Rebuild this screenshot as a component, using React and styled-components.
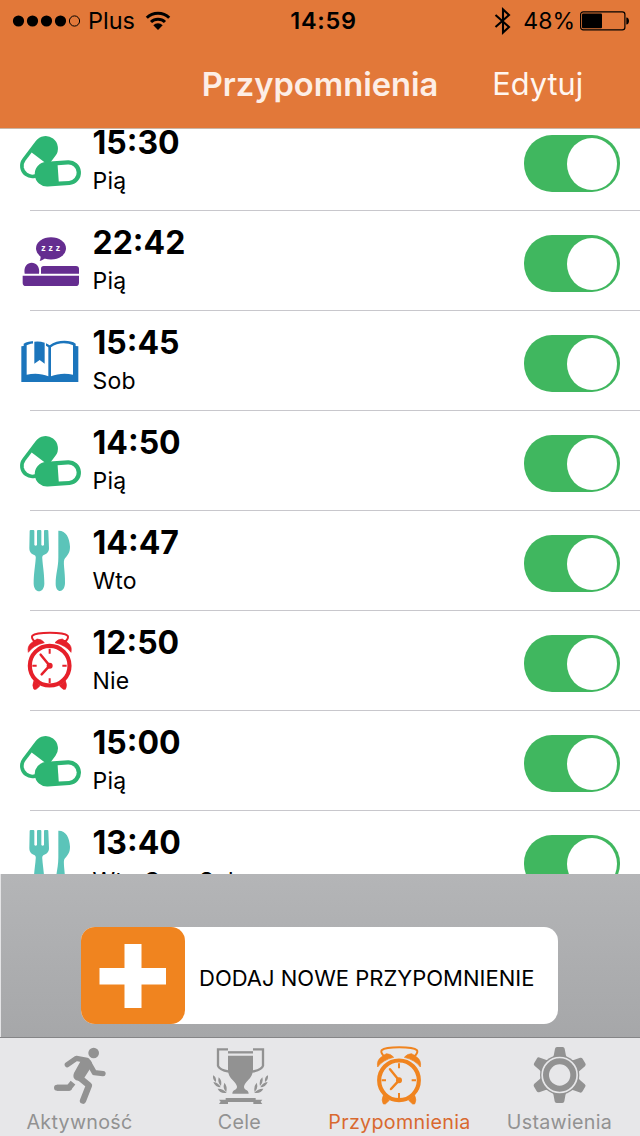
import React from 'react';
import styled, { createGlobalStyle } from 'styled-components';

const reminders = [
  { time: '15:30', days: 'Pią', icon: 'pills' },
  { time: '22:42', days: 'Pią', icon: 'sleep' },
  { time: '15:45', days: 'Sob', icon: 'book' },
  { time: '14:50', days: 'Pią', icon: 'pills' },
  { time: '14:47', days: 'Wto', icon: 'meal' },
  { time: '12:50', days: 'Nie', icon: 'alarm' },
  { time: '15:00', days: 'Pią', icon: 'pills' },
  { time: '13:40', days: 'Wto Czw Sob', icon: 'meal' },
];

export default function App() {
  return (
    <Screen>
      <GlobalStyle />
      <Header>
        <StatusBar>
          <Carrier>
            <SignalDots />
            <CarrierName>Plus</CarrierName>
            <WifiIcon />
          </Carrier>
          <Clock>14:59</Clock>
          <Power>
            <BluetoothIcon />
            <Percent>48%</Percent>
            <BatteryIcon />
          </Power>
        </StatusBar>
        <NavBar>
          <span />
          <Title>Przypomnienia</Title>
          <EditButton>Edytuj</EditButton>
        </NavBar>
      </Header>
      <List>
        {reminders.map((item, index) => {
          const Icon = rowIcons[item.icon];
          return (
            <Row key={index}>
              <Icon />
              <Details>
                <Time>{item.time}</Time>
                <Days>{item.days}</Days>
              </Details>
              <Toggle role="switch" aria-checked="true">
                <Knob />
              </Toggle>
            </Row>
          );
        })}
      </List>
      <AddPanel>
        <AddButton>
          <PlusBox>
            <svg width="68" height="64" viewBox="0 0 68 64">
              <path
                d="M25.5 0h17v24H67v16.500H42.500V64h-17V40.500H.500V24h25z"
                fill="#fff"
              />
            </svg>
          </PlusBox>
          <AddLabel>DODAJ NOWE PRZYPOMNIENIE</AddLabel>
        </AddButton>
      </AddPanel>
      <TabBar>
        <Tab>
          <RunnerIcon />
          <TabLabel>Aktywność</TabLabel>
        </Tab>
        <Tab>
          <TrophyIcon />
          <TabLabel>Cele</TabLabel>
        </Tab>
        <Tab $active>
          <AlarmIcon color="#f0841f" width="70" height="64" viewBox="47 358 210 192" />
          <TabLabel>Przypomnienia</TabLabel>
        </Tab>
        <Tab>
          <GearIcon />
          <TabLabel>Ustawienia</TabLabel>
        </Tab>
      </TabBar>
    </Screen>
  );
}

function SignalDots() {
  return (
    <svg width="69" height="14" viewBox="0 0 69 14">
      <circle cx="6.500" cy="7" r="5.600" />
      <circle cx="20.500" cy="7" r="5.600" />
      <circle cx="34.500" cy="7" r="5.600" />
      <circle cx="48.500" cy="7" r="5.600" />
      <circle cx="62.500" cy="7" r="5.100" fill="none" stroke="#000" />
    </svg>
  );
}

function WifiIcon() {
  return (
    <svg width="26" height="20" viewBox="0 0 26 20">
      <path
        d="M1.800 6.700a16 16 0 0 1 22.400 0M6 11a10 10 0 0 1 14 0"
        fill="none"
        stroke="#000"
        strokeWidth="3"
      />
      <path d="M13 19l-4.700-4.700a6.700 6.700 0 0 1 9.400 0z" />
    </svg>
  );
}

function BluetoothIcon() {
  return (
    <svg width="18" height="28" viewBox="0 0 18 28">
      <path
        d="M1.500 8l13.500 12-6 5.500V2.500l6 5.500-13.500 12"
        fill="none"
        stroke="#000"
        strokeWidth="2.100"
      />
    </svg>
  );
}

function BatteryIcon() {
  return (
    <svg width="50" height="20" viewBox="0 0 50 20">
      <rect x="0.600" y="0.800" width="44.300" height="18" rx="2.600" fill="none" stroke="#000" strokeWidth="1.200" />
      <rect x="2" y="2.500" width="20" height="14.700" rx="1" />
      <path d="M46.300 6.500c3.600 0 3.600 7 0 7z" />
    </svg>
  );
}

function PillsIcon() {
  return (
    <svg width="70" height="100" viewBox="45 -42 210 300">
      <g transform="translate(117 96.500) rotate(-53)">
        <rect x="-70" y="-37" width="140" height="74" rx="37" fill="#2db573" />
        <path d="M-2 -26h-31a26 26 0 0 0 0 52h31z" fill="#fff" />
      </g>
      <path d="M153 113l10-6 10-2-3-12z" fill="#fff" />
      <g transform="translate(173.500 145) rotate(-4)">
        <rect x="-69.500" y="-37" width="139" height="74" rx="37" fill="#2db573" />
        <path d="M1 -24h31a24.500 24.500 0 0 1 0 49h-31z" fill="#fff" />
      </g>
    </svg>
  );
}

function SleepIcon() {
  return (
    <svg width="70" height="100" viewBox="45 258 210 300">
      <g fill="#652d90">
        <ellipse cx="153" cy="370" rx="45" ry="33.500" />
        <path d="M116 380c6 9 8 18 3 28 7-2 12-5 17-10z" />
        <path d="M74 446c-8-44 50-44 43 0z" />
        <path d="M123 446v-15q0-8 8-8h97q9 0 9 9v14z" />
        <path d="M68 452h169v21q0 10-10 10H78q-10 0-10-10z" />
      </g>
      <Zzz x="124" y="379">zzz</Zzz>
    </svg>
  );
}

function BookIcon() {
  return (
    <svg width="70" height="100" viewBox="45 -27 210 300">
      <path
        d="M64 79l7-1V71C88 60 128 59 149 76 170 59 210 59 227 71v7l8 1v107H64z"
        fill="#1b75bc"
      />
      <path d="M80 76C98 66 128 68 145 82v87C126 160 101 159 80 164z" fill="#fff" />
      <path d="M153 82C171 67 202 67 219 76v88C198 159 173 160 153 169z" fill="#fff" />
      <path d="M99 62h39v20H99z" fill="#fff" />
      <path d="M103 65q16-2 31 3v63l-15-11-16 11z" fill="#1b75bc" />
    </svg>
  );
}

function MealIcon() {
  return (
    <svg width="70" height="100" viewBox="45 3 210 300">
      <g fill="#5bc4b9">
        <path d="M92 60h8q3 0 3 3v42q4 4 8 0V63q0-3 3-3h7q3 0 3 3v42q4 4 8 0V63q0-3 3-3h7q3 0 3 3l2 52c0 12-9 18-17 21-3 2-4 6-3 11 1 18 6 43 6 74-1 30-31 30-32 0 0-31 5-56 6-74 1-5 0-9-3-11-8-3-16-9-16-21l1-52q0-3 3-3z" />
        <path d="M175 62c22-1 34 20 35 48 0 18-7 25-15 35-8 9 1 36 0 75-1 30-28 31-28 2 0-31 8-47 8-80z" />
      </g>
    </svg>
  );
}

function AlarmIcon({
  color = '#e6202a',
  width = 70,
  height = 100,
  viewBox = '45 303 210 300',
}) {
  return (
    <svg width={width} height={height} viewBox={viewBox} color={color}>
      <path
        d="M110 393h-8c-5-6-8-11-5-16 13-12 93-12 106 0 3 5 0 10-5 16h-8"
        fill="none"
        stroke="currentColor"
        strokeWidth="6"
        strokeLinejoin="round"
      />
      <path
        d="M85 427q-4-19 10-29l16-11q14 0 22 11-33 8-48 29zM213 427q4-19-10-29l-16-11q-14 0-22 11 33 8 48 29zM102 512l18 15q-6 6-12 11h-6q-7-11 0-26zM196 512l-18 15q6 6 12 11h6q7-11 0-26z"
        fill="currentColor"
        stroke="currentColor"
        strokeWidth="2"
        strokeLinejoin="round"
      />
      <circle cx="149" cy="467" r="59.500" fill="none" stroke="currentColor" strokeWidth="12.500" />
      <path
        d="M149 416v15M149 505v15M97 467h13M187 467h13"
        stroke="currentColor"
        strokeWidth="6"
      />
      <path
        d="M122 434l27 33-24 26"
        fill="none"
        stroke="currentColor"
        strokeWidth="7.500"
        strokeLinecap="round"
      />
      <circle cx="149" cy="467" r="9" fill="currentColor" />
    </svg>
  );
}

function RunnerIcon() {
  return (
    <svg width="70" height="64" viewBox="135 42 210 192">
      <g fill="none" stroke="#929292" strokeLinecap="round" strokeLinejoin="round">
        <path d="M202 104l27-19 32 6M265 96l18 32 26 3" strokeWidth="16" />
        <path d="M171 173h36l12-15" strokeWidth="18" strokeLinecap="butt" />
        <path d="M171 173h36" strokeWidth="18" />
        <path d="M235 140l32 26-18 46" strokeWidth="19" />
      </g>
      <path
        d="M232 82l33 6q13 5 11 19l-23 36q-10 13-25 8-12-8-6-22l20-36z"
        fill="#929292"
      />
      <circle cx="281" cy="69" r="16" fill="#929292" />
    </svg>
  );
}

function TrophyIcon() {
  const laurel =
    'M639 136q11 5 9 20-10-5-9-20zM640 156q16 2 22 16-16 0-22-16zM656 142q11 9 7 26-11-10-7-26zM653 176q15-1 27 12-18 5-27-12zM673 158q10 11 6 28-12-10-6-28z';
  return (
    <svg width="70" height="64" viewBox="615 42 210 192">
      <g fill="none" stroke="#929292" strokeWidth="7">
        <path d="M684 58h-30v49q3 12 33 18M759 58h30v49q-3 12-33 18" />
        <path d="M684 67h75" />
      </g>
      <g fill="#929292">
        <path d="M684 77h75v43c-1 27-26 35-27 50 0 11 14 8 14 21h-49c0-13 14-10 14-21-1-15-27-23-27-50z" />
        <path d="M677 204h90v5h20l-5 6 5 7h-27v-6h-76v6h-27l5-7-5-6h20z" />
        <path d={laurel} />
        <path d={laurel} transform="translate(1443 0) scale(-1 1)" />
      </g>
    </svg>
  );
}

function GearIcon() {
  const tooth = 'M694 96q9-20 11-40 1-5 6-5h17q5 0 6 5 2 20 11 40z';
  return (
    <svg width="70" height="64" viewBox="615 42 210 192">
      <g fill="#929292">
        {[0, 60, 120, 180, 240, 300].map((angle) => (
          <path key={angle} d={tooth} transform={`rotate(${angle} 719 135)`} />
        ))}
        <circle cx="719" cy="135" r="59" />
      </g>
      <circle cx="719" cy="135" r="52.500" fill="none" stroke="#e7e7e9" strokeWidth="5" />
      <circle cx="719" cy="135" r="32" fill="#e7e7e9" />
    </svg>
  );
}

const rowIcons = {
  pills: PillsIcon,
  sleep: SleepIcon,
  book: BookIcon,
  meal: MealIcon,
  alarm: AlarmIcon,
};

const GlobalStyle = createGlobalStyle`
  * {
    box-sizing: border-box;
  }

  body {
    margin: 0;
    background-color: #fff;
    font-family: Inter, 'Liberation Sans', sans-serif;
  }

  svg {
    display: block;
    flex-shrink: 0;
  }

  button {
    padding: 0;
    border: 0;
    background: none;
    font: inherit;
    color: inherit;
  }
`;

const Screen = styled.div`
  display: flex;
  flex-direction: column;
  width: 640px;
  height: 1136px;
  overflow: hidden;
`;

const Header = styled.header`
  flex: 0 0 129px;
  background-color: #e27839;
  border-bottom: 1px solid #c9b5a5;
`;

const StatusBar = styled.div`
  display: grid;
  grid-template-columns: 1fr auto 1fr;
  align-items: center;
  height: 40px;
  padding: 0 10px 0 12px;
  line-height: 40px;
  font-size: 23.5px;
`;

const Carrier = styled.div`
  display: flex;
  align-items: center;
`;

const CarrierName = styled.span`
  width: 64px;
  padding: 1px 0 0 7px;
`;

const Clock = styled.div`
  padding: 1px 0 0 5px;
  font-weight: 600;
  letter-spacing: 0.7px;
`;

const Power = styled.div`
  display: flex;
  align-items: center;
  justify-content: flex-end;
`;

const Percent = styled.span`
  padding: 1px 5px 0 11px;
  font-size: 23px;
`;

const NavBar = styled.div`
  display: grid;
  grid-template-columns: 1fr auto 1fr;
  align-items: center;
  height: 88px;
  line-height: 88px;
`;

const Title = styled.h1`
  margin: 0;
  color: #fdeee6;
  font-size: 32.7px;
  font-weight: 600;
`;

const EditButton = styled.button`
  padding-left: 54px;
  color: #fff6f0;
  font-size: 30.7px;
  text-align: left;
`;

const List = styled.main`
  flex: 0 0 745px;
  overflow: hidden;
`;

const Row = styled.div`
  display: flex;
  align-items: center;
  height: 100px;
  padding: 0 20.5px 0 15px;
  background: linear-gradient(#c8c7cc, #c8c7cc) 30px 100% / 100% 1px no-repeat;

  &:first-child {
    margin-top: -18px;
  }
`;

const Details = styled.div`
  flex: 1;
  height: 100px;
  padding: 12px 0 0 7.5px;
`;

const Time = styled.div`
  font-size: 32px;
  font-weight: 700;
  line-height: 40px;
`;

const Days = styled.div`
  font-size: 23px;
  line-height: 37px;
  letter-spacing: 0.2px;
`;

const Toggle = styled.button`
  display: flex;
  justify-content: flex-end;
  align-items: center;
  width: 96px;
  height: 57px;
  margin-top: 5px;
  padding-right: 3px;
  border-radius: 28px;
  background-color: #40b75f;
`;

const Knob = styled.span`
  width: 50px;
  height: 52px;
  border-radius: 50%;
  background-color: #fff;
`;

const AddPanel = styled.section`
  flex: 0 0 163px;
  padding: 53px 0 0 80px;
  border-left: 1px solid #e4e4e6;
  background: linear-gradient(#b4b5b7, #a6a7a9);
`;

const AddButton = styled.button`
  display: flex;
  align-items: center;
  width: 477px;
  height: 97px;
  border-radius: 14px;
  background-color: #fff;
`;

const PlusBox = styled.span`
  display: flex;
  align-items: center;
  justify-content: center;
  width: 104px;
  height: 97px;
  border-radius: 14px;
  background-color: #f0841f;
`;

const AddLabel = styled.span`
  padding: 4px 0 0 14px;
  font-size: 22px;
  white-space: nowrap;
`;

const TabBar = styled.nav`
  display: grid;
  grid-template-columns: repeat(4, 1fr);
  flex: 0 0 99px;
  border-top: 1px solid #858587;
  background-color: #e7e7e9;
`;

const Tab = styled.div`
  display: flex;
  flex-direction: column;
  align-items: center;
  padding-top: 6px;
  color: ${({ $active }) => ($active ? '#d9692f' : '#929292')};
`;

const TabLabel = styled.span`
  margin-right: 1px;
  font-size: 19.7px;
  line-height: 29px;
  letter-spacing: 0.3px;
`;

const Zzz = styled.text`
  fill: #fff;
  font-family: 'Liberation Sans', sans-serif;
  font-size: 26px;
  font-weight: 700;
  letter-spacing: 8.5px;
`;
